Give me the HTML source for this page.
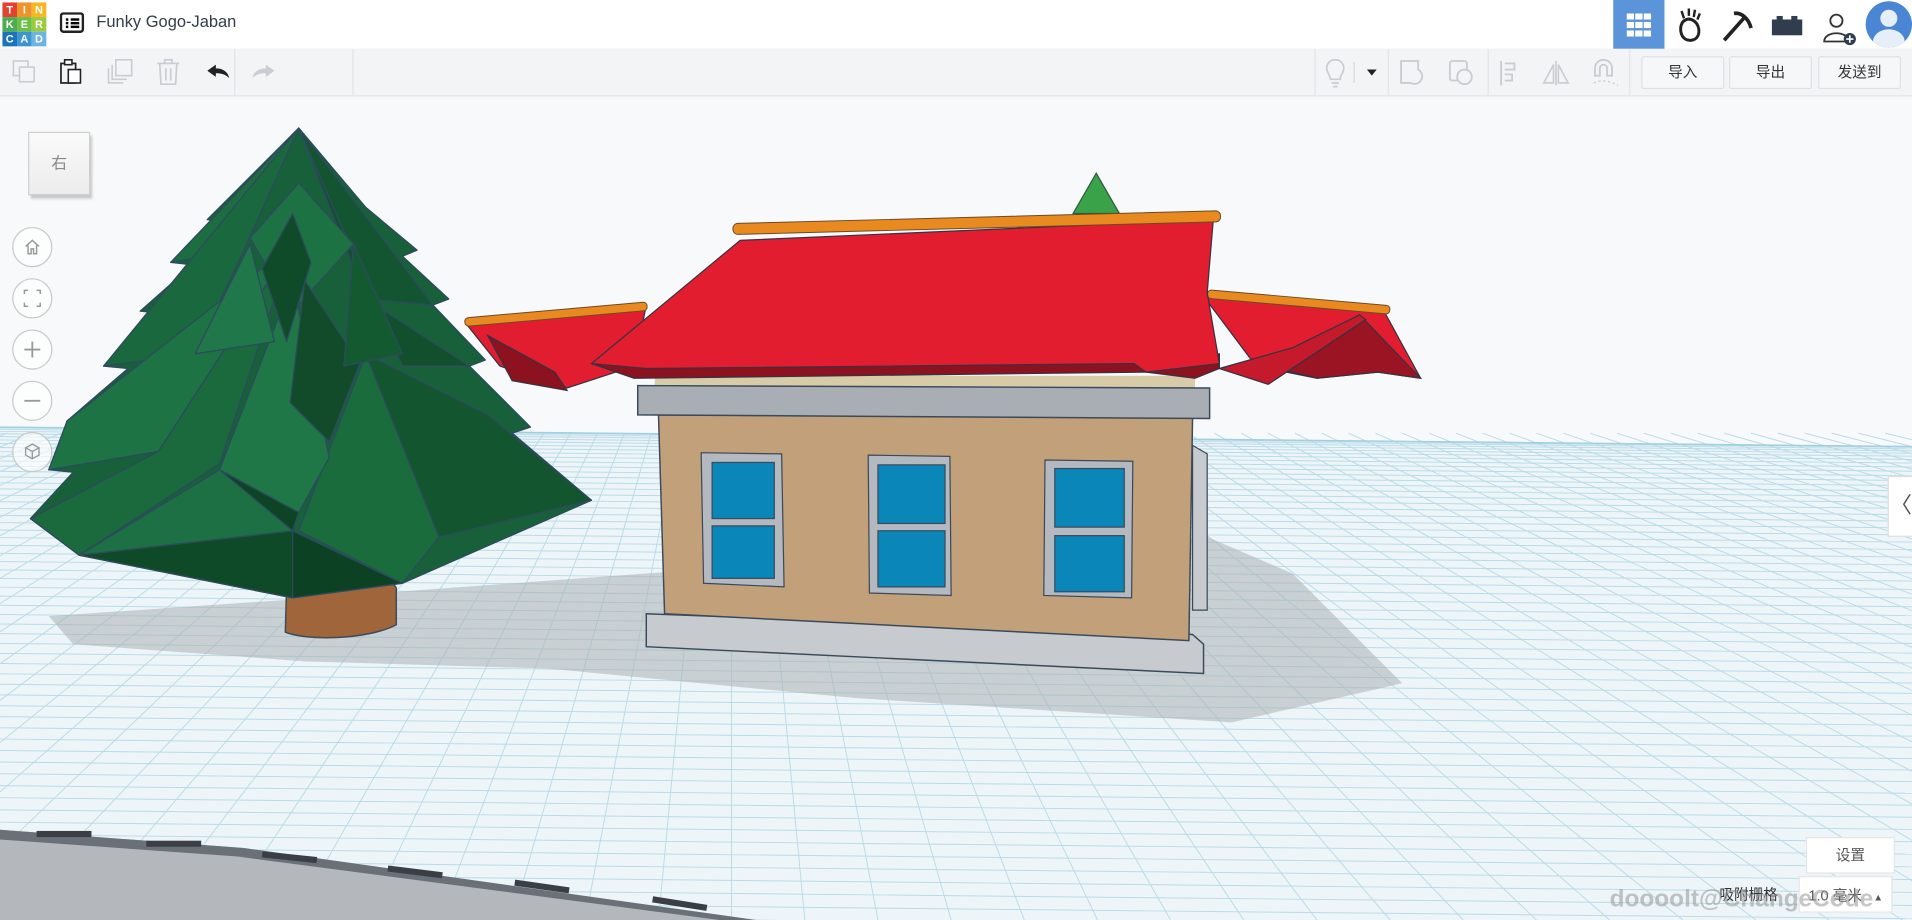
<!DOCTYPE html>
<html><head><meta charset="utf-8">
<style>
html,body{margin:0;padding:0;width:1912px;height:920px;overflow:hidden;background:#fff;}
#w{position:absolute;left:0;top:0;width:1568px;height:754px;transform:scale(1.21939,1.22016);transform-origin:0 0;font-family:"Liberation Sans","Noto Sans CJK SC",sans-serif;}
.hdr{position:absolute;left:0;top:0;width:1568px;height:40px;background:#fff;border-bottom:1px solid #dcdfe3;}
.tb{position:absolute;left:0;top:40px;width:1568px;height:38px;background:#f3f4f6;border-bottom:1px solid #e3e5e8;}
.btn{position:absolute;top:6px;height:25px;width:66px;border:1px solid #dfe1e4;background:#f6f7f8;border-radius:2px;font-size:12px;color:#333;text-align:center;line-height:25px;}
.sep{position:absolute;top:0;width:1px;height:38px;background:#e2e4e7;}
.nav{position:absolute;left:10px;width:31px;height:31px;border:1px solid #c8c8c8;border-radius:50%;background:rgba(255,255,255,.6);}
</style></head><body><div id="w">
<svg width="1568" height="754" viewBox="0 0 1568 754" style="position:absolute;left:0;top:0">
<rect width="1568" height="754" fill="#f8f9fa"/>
<polygon points="0,350 1568,366 1568,754 0,754" fill="#eef5f8"/>
<g id="grid" stroke="#b9dbe8" stroke-width="0.8" fill="none"></g>
<line x1="0" y1="350" x2="1568" y2="366" stroke="#9fcfe0" stroke-width="1.2"/>
<polygon points="40,505 230,492 530,470 990,440 1060,470 1150,560 1010,592 700,572 450,548 250,542 60,528" fill="#aab0b5" opacity=".55"/>
<polygon points="0,680 200,695 620,754 0,754" fill="#b4b8bc"/>
<polygon points="0,680 200,695 620,754 590,754 195,702 0,688" fill="#6a7078"/>
<g fill="#3a3f45"><rect x="30" y="681" width="45" height="5"/><rect x="120" y="689" width="45" height="5"/><rect x="215" y="700" width="45" height="5" transform="rotate(6 237 702)"/><rect x="318" y="712" width="45" height="5" transform="rotate(7 340 714)"/><rect x="422" y="724" width="45" height="5" transform="rotate(8 444 726)"/><rect x="535" y="738" width="45" height="5" transform="rotate(9 557 740)"/></g>
<!-- tree -->
<path d="M235,482 C240,470 320,468 325,482 L325,512 C300,525 250,525 234,518 Z" fill="#a0653a" stroke="#3c4a5c" stroke-width="1.2"/>
<g stroke="#2e4a5e" stroke-width="1.1" stroke-linejoin="round">
<polygon points="245,105 170,180 185,182 140,215 158,217 115,255 135,257 85,300 105,302 55,345 75,347 40,385 60,387 25,425 65,455 240,490 330,478 485,410 420,355 435,350 385,300 398,295 355,250 368,245 330,210 342,205 300,170" fill="#17603a"/>
<polygon points="245,105 140,215 200,205" fill="#1c6e41"/>
<polygon points="245,105 355,250 300,245" fill="#135531"/>
<polygon points="245,105 85,300 160,290 200,205" fill="#1a683d"/>
<polygon points="245,105 300,245 385,300 330,300" fill="#124f2c"/>
<polygon points="240,200 55,345 40,385 130,370" fill="#1d7344"/>
<polygon points="240,200 130,370 25,425 65,455 180,380" fill="#1a6a3d"/>
<polygon points="65,455 240,435 240,490" fill="#0f4a28"/>
<polygon points="240,435 240,490 330,478" fill="#0c4223"/>
<polygon points="300,290 245,435 330,478 360,440" fill="#1a6c3d"/>
<polygon points="300,290 360,440 485,410 400,340" fill="#13552f"/>
<polygon points="245,150 205,195 240,255 290,200" fill="#1d7244"/>
<polygon points="240,230 180,385 245,420 270,375" fill="#1f7747"/>
<polygon points="250,230 238,330 270,362 295,298" fill="#114b2a"/>
<polygon points="180,385 245,420 240,435 170,420" fill="#0d4426"/>
<polygon points="205,200 160,290 225,280" fill="#20784a"/>
<polygon points="290,200 330,290 282,300" fill="#145a31"/>
<polygon points="240,175 215,220 235,280 255,215" fill="#0f4a29"/>
<polygon points="180,385 65,455 240,435" fill="#1d7043"/>
</g>
<!-- green cone -->
<polygon points="899,142 880,175 918,175" fill="#3aa34a" stroke="#2e5a3e"/>
<!-- left wing -->
<polygon points="382,265 530,250 520,300 465,318 410,300" fill="#e31d30" stroke="#334" stroke-width="1"/>
<polygon points="400,275 420,312 465,320 455,305" fill="#8c1220" stroke="#334" stroke-width="1"/>
<rect x="381" y="254" width="150" height="7" rx="3" fill="#e88a1f" stroke="#6a4a2a" stroke-width=".8" transform="rotate(-5 456 258)"/>
<!-- right wing -->
<polygon points="985,240 1135,255 1165,310 1130,305 1080,310 1030,300" fill="#e31d30" stroke="#334" stroke-width="1"/>
<polygon points="1115,258 1165,310 1130,305 1080,310 1040,300 1080,278" fill="#9b1423" stroke="#334" stroke-width="1"/>
<rect x="990" y="244" width="150" height="7" rx="3" fill="#e88a1f" stroke="#6a4a2a" stroke-width=".8" transform="rotate(5 1065 248)"/>
<!-- building -->
<polygon points="537,308 980,308 980,320 537,320" fill="#d8cba8"/>
<polygon points="978,365 990,372 990,500 978,500" fill="#c7cace" stroke="#3a4a5c"/>
<polygon points="530,503 978,520 987,528 987,552 530,530" fill="#c7cacf" stroke="#3a4a5c" stroke-width="1.2"/>
<polygon points="540,340 978,342 975,525 545,503" fill="#c2a07a" stroke="#3a4a5c" stroke-width="1.2"/>
<polygon points="523,316 992,318 992,343 523,340" fill="#a8aeb4" stroke="#3a4a5c" stroke-width="1.2"/>
<g stroke="#3a4a5c" stroke-width="1">
<polygon points="575,371 641,372 643,481 577,478" fill="#b4b9bf"/>
<rect x="584" y="379" width="51" height="46" fill="#0a86b8"/><rect x="584" y="431" width="51" height="43" fill="#0a86b8"/>
<polygon points="712,373 779,374 780,488 713,486" fill="#b4b9bf"/>
<rect x="720" y="381" width="55" height="48" fill="#0a86b8"/><rect x="720" y="435" width="55" height="46" fill="#0a86b8"/>
<polygon points="857,377 929,378 928,490 856,488" fill="#b4b9bf"/>
<rect x="865" y="384" width="57" height="48" fill="#0a86b8"/><rect x="865" y="439" width="57" height="46" fill="#0a86b8"/>
</g>
<!-- main roof -->
<polygon points="485,298 700,295 1000,290 1000,302 980,310 940,305 520,310" fill="#8c1220" stroke="#334" stroke-width="1"/>
<polygon points="607,197 995,180 990,240 1000,298 940,305 930,298 530,302 485,298" fill="#e31d30" stroke="#334" stroke-width="1"/>
<rect x="601" y="178" width="400" height="9" rx="4" fill="#e88a1f" stroke="#6a4a2a" stroke-width=".8" transform="rotate(-1.5 800 182)"/>
<polygon points="1000,302 1060,285 1115,258 1120,262 1040,315" fill="#c51a2b" stroke="#334" stroke-width="1"/>
</svg>
<script>
(function(){var g=document.getElementById('grid'),s='';
for(var i=0;i<60;i++){var t=i/60;var y=352+Math.pow(t,1.6)*420;s+='<line x1="0" y1="'+(y-2)+'" x2="1568" y2="'+(y+14)+'"/>';}
for(var k=-80;k<110;k++){var xt=600+k*22, xb=600+k*60;s+='<line x1="'+xt+'" y1="355" x2="'+xb+'" y2="754"/>';}
g.innerHTML=s;})();
</script>
<div class="hdr">
 <div style="position:absolute;left:2px;top:2px;width:36px;height:36px;display:grid;grid-template-columns:repeat(3,12px);font-size:9px;font-weight:bold;color:#fff;text-align:center;line-height:12px">
 <span style="background:#e2422f">T</span><span style="background:#f2922b">I</span><span style="background:#f5b823">N</span>
 <span style="background:#4cae4f">K</span><span style="background:#6abf45">E</span><span style="background:#9bca3e">R</span>
 <span style="background:#1c73bd">C</span><span style="background:#3c95d1">A</span><span style="background:#6db4e2">D</span></div>
 <svg style="position:absolute;left:49px;top:10px" width="20" height="17"><rect x="1" y="1" width="18" height="15" rx="2" fill="none" stroke="#222" stroke-width="2"/><rect x="5" y="5" width="2" height="2"/><rect x="9" y="5" width="7" height="2"/><rect x="5" y="8" width="2" height="2"/><rect x="9" y="8" width="7" height="2"/><rect x="5" y="11" width="2" height="2"/><rect x="9" y="11" width="7" height="2"/></svg>
 <div style="position:absolute;left:79px;top:10px;font-size:13.5px;color:#333c4a">Funky Gogo-Jaban</div>
 <div style="position:absolute;left:1323px;top:0;width:42px;height:40px;background:#5b94d8"><svg style="margin:11px 0 0 11px" width="20" height="19"><g fill="#fff"><rect width="6" height="5"/><rect x="7" width="6" height="5"/><rect x="14" width="6" height="5"/><rect y="7" width="6" height="5"/><rect x="7" y="7" width="6" height="5"/><rect x="14" y="7" width="6" height="5"/><rect y="14" width="6" height="5"/><rect x="7" y="14" width="6" height="5"/><rect x="14" y="14" width="6" height="5"/></g></svg></div>
 <svg style="position:absolute;left:1374px;top:6px" width="24" height="30"><path d="M6,12 C2,18 5,28 13,27 C21,26 21,15 15,11 C12,9 9,9 6,12Z" fill="none" stroke="#222" stroke-width="2.4"/><path d="M7,9 L5,3 M11,7 L11,1 M15,8 L16,2 M18,10 L20,5" stroke="#222" stroke-width="2"/></svg>
 <svg style="position:absolute;left:1410px;top:7px" width="28" height="28"><path d="M4,26 L20,8 M12,4 C18,3 24,8 26,16" stroke="#222" stroke-width="3" fill="none"/></svg>
 <svg style="position:absolute;left:1453px;top:13px" width="26" height="16"><path d="M0,3 H4 V0 H9 V3 H16 V0 H21 V3 H25 V16 H0Z" fill="#2f3d4c"/></svg>
 <svg style="position:absolute;left:1494px;top:8px" width="30" height="30"><circle cx="12" cy="9" r="5" fill="none" stroke="#333" stroke-width="1.5"/><path d="M2,26 C2,17 22,17 22,26 Z" fill="none" stroke="#333" stroke-width="1.5"/><circle cx="23" cy="24" r="5" fill="#2f3d4c"/><path d="M23,21V27M20,24H26" stroke="#fff" stroke-width="1.4"/></svg>
 <div style="position:absolute;left:1530px;top:1px;width:38px;height:38px;border-radius:50%;background:#4a86d4;overflow:hidden"><div style="position:absolute;left:12px;top:7px;width:14px;height:14px;border-radius:50%;background:#e6eefa"></div><div style="position:absolute;left:6px;top:23px;width:26px;height:20px;border-radius:50%;background:#e6eefa"></div></div>
</div>
<div class="tb">
 <svg style="position:absolute;left:10px;top:9px" width="20" height="20"><rect x="1" y="1" width="12" height="12" fill="none" stroke="#c9ccd0" stroke-width="1.3"/><rect x="6" y="6" width="12" height="12" fill="#f3f4f6" stroke="#c9ccd0" stroke-width="1.3"/></svg>
 <svg style="position:absolute;left:49px;top:8px" width="20" height="22"><rect x="1" y="4" width="12" height="16" fill="none" stroke="#222" stroke-width="1.4"/><rect x="4" y="1" width="6" height="4" fill="#fff" stroke="#222" stroke-width="1.3"/><rect x="7" y="9" width="10" height="11" fill="#fff" stroke="#222" stroke-width="1.3"/></svg>
 <svg style="position:absolute;left:88px;top:8px" width="22" height="22"><rect x="7" y="1" width="13" height="13" fill="none" stroke="#c9ccd0" stroke-width="1.3"/><path d="M4,5V17H16M1,8V20H13" fill="none" stroke="#c9ccd0" stroke-width="1.3"/></svg>
 <svg style="position:absolute;left:128px;top:8px" width="20" height="22"><path d="M1,4H19M7,4V1H13V4M3,4L4,21H16L17,4M8,8V18M12,8V18" fill="none" stroke="#c9ccd0" stroke-width="1.4"/></svg>
 <div class="sep" style="left:192px"></div>
 <svg style="position:absolute;left:169px;top:12px" width="20" height="14"><path d="M8,1L1,6L8,11V8C13,8 16,9 19,12C18,7 14,4 8,4Z" fill="#222"/></svg>
 <svg style="position:absolute;left:206px;top:12px" width="20" height="14"><path d="M12,1L19,6L12,11V8C7,8 4,9 1,12C2,7 6,4 12,4Z" fill="#c9ccd0"/></svg>
 <div class="sep" style="left:289px"></div>
 <div class="sep" style="left:1078px"></div>
 <svg style="position:absolute;left:1086px;top:8px" width="18" height="24"><path d="M9,1C4,1 2,5 2,8C2,12 5,13 5,17H13C13,13 16,12 16,8C16,5 14,1 9,1ZM6,20H12M7,23H11" fill="none" stroke="#c9ccd0" stroke-width="1.4"/></svg>
 <div style="position:absolute;left:1110px;top:11px;width:1px;height:17px;background:#d4d6d9"></div>
 <div style="position:absolute;left:1121px;top:17px;border-left:4px solid transparent;border-right:4px solid transparent;border-top:5px solid #222"></div>
 <div class="sep" style="left:1138px"></div>
 <svg style="position:absolute;left:1147px;top:8px" width="24" height="24"><path d="M2,2H16V9A6,6 0 1 1 10,20H2Z" fill="none" stroke="#c9ccd0" stroke-width="1.5"/></svg>
 <svg style="position:absolute;left:1187px;top:8px" width="24" height="24"><rect x="2" y="2" width="14" height="16" rx="2" fill="none" stroke="#c9ccd0" stroke-width="1.5"/><circle cx="14" cy="15" r="6" fill="#f3f4f6" stroke="#c9ccd0" stroke-width="1.5"/></svg>
 <div class="sep" style="left:1220px"></div>
 <svg style="position:absolute;left:1229px;top:9px" width="20" height="22"><path d="M2,1V21M5,3H13V8H5M5,12H11V17H5" fill="none" stroke="#c9ccd0" stroke-width="1.5"/></svg>
 <svg style="position:absolute;left:1264px;top:9px" width="24" height="22"><path d="M12,1V21M10,4L2,19H10ZM14,4L22,19H14Z" fill="none" stroke="#c9ccd0" stroke-width="1.3"/></svg>
 <svg style="position:absolute;left:1303px;top:8px" width="26" height="24"><path d="M5,14V8A7,7 0 0 1 19,8V14H15V8A3,3 0 0 0 9,8V14Z" fill="none" stroke="#c9ccd0" stroke-width="1.5"/><path d="M4,20C10,17 16,18 24,22" fill="none" stroke="#c9ccd0" stroke-dasharray="2 2"/></svg>
 <div class="sep" style="left:1336px"></div>
 <div class="btn" style="left:1346px">导入</div>
 <div class="btn" style="left:1418px">导出</div>
 <div class="btn" style="left:1491px">发送到</div>
</div>
<div style="position:absolute;left:23px;top:108px;width:49px;height:50px;background:linear-gradient(#fafafa,#ececec);border:1px solid #d0d0d0;box-shadow:2px 3px 2px #c8c8c8;text-align:center;line-height:50px;font-size:13px;color:#888">右</div>
<div class="nav" style="top:186px"><svg width="31" height="31"><path d="M10,15L15.5,10L21,15M12,14V21H14.5V17H16.5V21H19V14" fill="none" stroke="#999" stroke-width="1.2"/></svg></div>
<div class="nav" style="top:228px"><svg width="31" height="31"><path d="M9,12V9H12M19,9H22V12M22,19V22H19M12,22H9V19" fill="none" stroke="#999" stroke-width="1.2"/></svg></div>
<div class="nav" style="top:270px"><svg width="31" height="31"><path d="M15.5,9V22M9,15.5H22" stroke="#999" stroke-width="1.5"/></svg></div>
<div class="nav" style="top:312px"><svg width="31" height="31"><path d="M9,15.5H22" stroke="#999" stroke-width="1.5"/></svg></div>
<div class="nav" style="top:354px"><svg width="31" height="31"><path d="M15.5,9L21,12V18L15.5,21L10,18V12ZM10,12L15.5,15L21,12M15.5,15V21" fill="none" stroke="#999" stroke-width="1.1"/></svg></div>
<div style="position:absolute;left:1548px;top:390px;width:20px;height:48px;background:#fff;border:1px solid #ddd;border-right:0;font-size:18px;color:#555;text-align:center;line-height:46px">〈</div>
<div style="position:absolute;left:1481px;top:686px;width:71px;height:28px;background:#fff;border:1px solid #e5e5e5;font-size:12px;color:#555;text-align:center;line-height:28px">设置</div>
<div style="position:absolute;left:1410px;top:724px;font-size:12px;color:#333">吸附栅格</div>
<div style="position:absolute;left:1475px;top:718px;width:77px;height:30px;background:#fff;border:1px solid #e5e5e5;font-size:12px;color:#555;line-height:30px;padding-left:7px;box-sizing:border-box">1.0 毫米 <span style="font-size:8px;margin-left:6px">▲</span></div>
<div style="position:absolute;left:1320px;top:726px;font-size:20px;font-weight:bold;color:rgba(150,150,150,.55)">doooolt@ChangeCode</div>
</div></body></html>
